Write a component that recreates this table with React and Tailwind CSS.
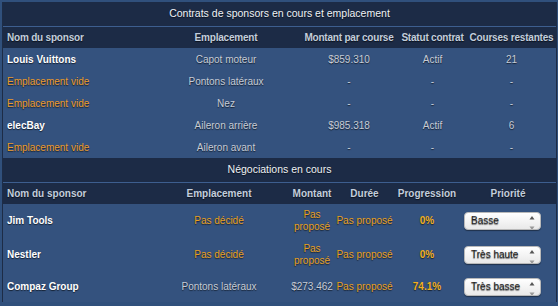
import { useState } from 'react'

const shadow = '[text-shadow:0_1px_1px_rgba(0,0,0,0.6)]'

const contracts = [
  { name: 'Louis Vuittons', place: 'Capot moteur', amount: '$859.310', status: 'Actif', left: '21' },
  { name: null, place: 'Pontons latéraux', amount: '-', status: '-', left: '-' },
  { name: null, place: 'Nez', amount: '-', status: '-', left: '-' },
  { name: 'elecBay', place: 'Aileron arrière', amount: '$985.318', status: 'Actif', left: '6' },
  { name: null, place: 'Aileron avant', amount: '-', status: '-', left: '-' },
]

const negotiations = [
  { name: 'Jim Tools', place: null, amount: null, progress: '0%', priority: 'Basse', h: 'h-[34px]' },
  { name: 'Nestler', place: null, amount: null, progress: '0%', priority: 'Très haute', h: 'h-[34px]' },
  { name: 'Compaz Group', place: 'Pontons latéraux', amount: '$273.462', progress: '74.1%', priority: 'Très basse', h: 'h-[30px]' },
]

const PrioritySelect = ({ value }) => {
  return (
    <div className="ml-[4px] flex h-[18px] w-[77px] items-center justify-between overflow-hidden rounded-[4px] border border-[#b9b9b9] bg-gradient-to-b from-white to-[#e9e9e9] pl-[6px] pr-[5px] text-[10px] text-[#222] shadow-[0_1px_1px_rgba(0,0,0,0.4)]">
      <span>{value}</span>
      <svg width="6" height="16" viewBox="0 0 6 16" aria-hidden="true">
        <path d="M3 3 L5.5 6.5 L0.5 6.5 Z" fill="#555" />
        <path d="M3 17 L5.5 13.5 L0.5 13.5 Z" fill="#999" />
      </svg>
    </div>
  )
}

const TitleRow = ({ cols, children }) => (
  <tr>
    <th
      colSpan={cols}
      className={`h-[24px] border-b border-[#3d5e8f] bg-[#1c2b46] text-center text-[10.5px] font-normal text-[#eef2f6] ${shadow}`}
    >
      {children}
    </th>
  </tr>
)

export default function App() {
  const [rows] = useState(negotiations)

  return (
    <div className="h-[306px] w-[558px] overflow-hidden bg-[#30507c] pl-[2px] pr-[1px] pt-[2px] font-['Liberation_Sans',Arial,sans-serif]">
      <div className="border-l border-r border-[#1d2c46]">
        <table className="w-full table-fixed border-collapse">
          <colgroup>
            <col className="w-[149px]" />
            <col className="w-[148px]" />
            <col className="w-[98px]" />
            <col className="w-[69px]" />
            <col />
          </colgroup>
          <thead>
            <TitleRow cols={5}>Contrats de sponsors en cours et emplacement</TitleRow>
            <tr className={`h-[22px] bg-[#1c2b46] text-[10px] tracking-[-0.2px] text-[#c3cedc] ${shadow}`}>
              <th className="pl-[4px] text-left font-bold">Nom du sponsor</th>
              <th className="text-center font-bold">Emplacement</th>
              <th className="text-center font-bold">Montant par course</th>
              <th className="text-center font-bold">Statut contrat</th>
              <th className="text-center font-bold">Courses restantes</th>
            </tr>
          </thead>
          <tbody className={`bg-[#34527e] text-[10px] text-[#c6ccd6] ${shadow}`}>
            {contracts.map((c, i) => (
              <tr key={i} className="h-[22px]">
                <td className="pl-[4px]">
                  {c.name ? (
                    <span className="font-bold text-white">{c.name}</span>
                  ) : (
                    <span className="text-[#eb9b2b]">Emplacement vide</span>
                  )}
                </td>
                <td className="text-center">{c.place}</td>
                <td className="text-center">{c.amount}</td>
                <td className="text-center">{c.status}</td>
                <td className="text-center">{c.left}</td>
              </tr>
            ))}
          </tbody>
        </table>

        <table className="w-full table-fixed border-collapse">
          <colgroup>
            <col className="w-[146px]" />
            <col className="w-[140px]" />
            <col className="w-[46px]" />
            <col className="w-[59px]" />
            <col className="w-[66px]" />
            <col />
          </colgroup>
          <thead>
            <TitleRow cols={6}>Négociations en cours</TitleRow>
            <tr className={`h-[22px] bg-[#1c2b46] text-[10px] text-[#c3cedc] ${shadow}`}>
              <th className="pl-[4px] text-left font-bold">Nom du sponsor</th>
              <th className="text-center font-bold">Emplacement</th>
              <th className="text-center font-bold">Montant</th>
              <th className="text-center font-bold">Durée</th>
              <th className="text-center font-bold">Progression</th>
              <th className="text-center font-bold">Priorité</th>
            </tr>
          </thead>
          <tbody className={`bg-[#34527e] text-[10px] leading-[12px] text-[#c6ccd6] ${shadow}`}>
            {rows.map((r, i) => (
              <tr key={i} className={r.h}>
                <td className="pl-[4px] font-bold text-white">{r.name}</td>
                <td className={`text-center ${r.place ? '' : 'text-[#e8a020]'}`}>{r.place || 'Pas décidé'}</td>
                <td className={`px-[2px] text-center ${r.amount ? '' : 'text-[#e8a020]'}`}>{r.amount || 'Pas proposé'}</td>
                <td className="text-center text-[#e8a020]">Pas proposé</td>
                <td className="text-center font-bold text-[#f2b01e]">{r.progress}</td>
                <td>
                  <PrioritySelect value={r.priority} />
                </td>
              </tr>
            ))}
          </tbody>
        </table>
      </div>
    </div>
  )
}
